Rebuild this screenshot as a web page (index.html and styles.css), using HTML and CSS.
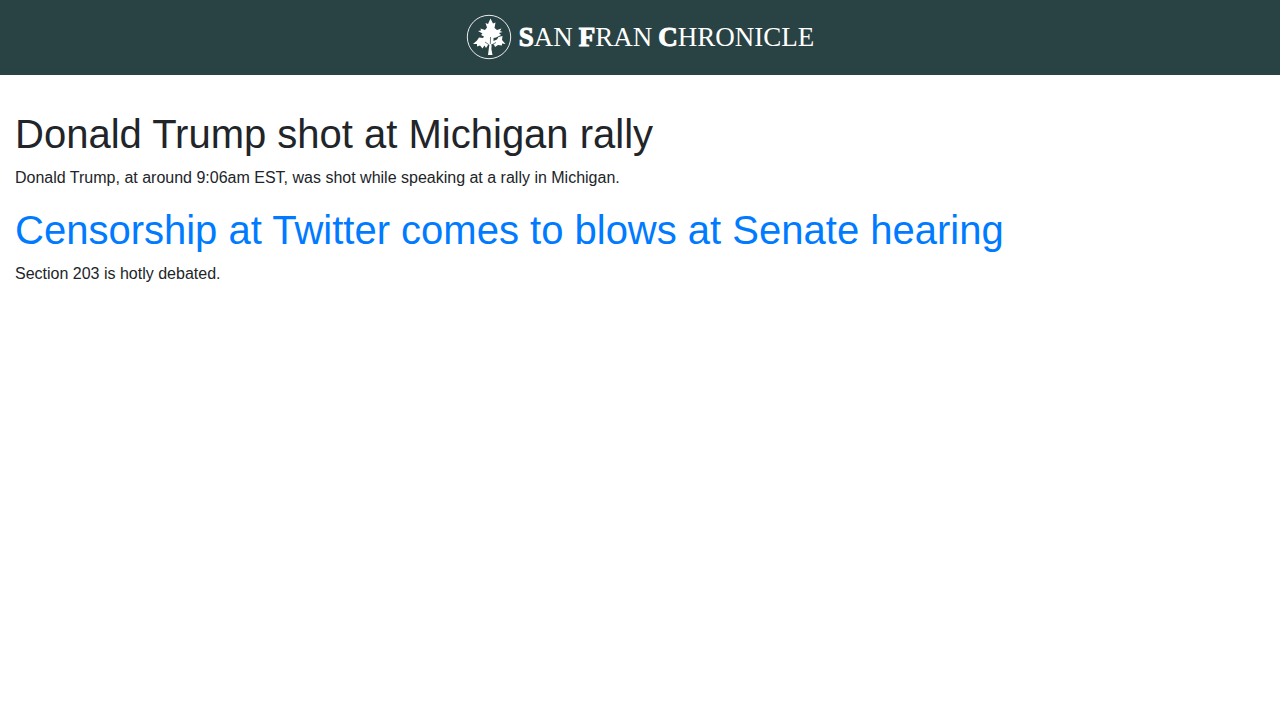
FILE: index.html
```html
<!DOCTYPE html>
<html lang="en">
<head>
<meta charset="utf-8">
<meta name="viewport" content="width=device-width, initial-scale=1">
<title>San Fran Chronicle</title>
<link rel="stylesheet" href="styles.css">
</head>
<body>
<header class="masthead">
  <svg class="emblem" viewBox="0 0 46 46" aria-hidden="true">
    <circle cx="23" cy="23" r="21.7" fill="none" stroke="currentColor" stroke-width="0.9"/>
    <path fill="currentColor" d="M24.500 4.500L27 9.500L29.500 8.500L28.500 14L31 16L35.500 14.500L34 17L36.500 18L33 19L35 21L30 23.500L27.500 24L27.500 27L31 25.500L32.500 23L36.500 22L36 26L39.500 30L36 29.500L36 31.500L32 31L29 33L28 30.500L25.700 30L25.400 35L26.500 41L22 41L23.300 31L22 31L20 34L18.500 31.500L16.500 34.500L14 31.500L11 32.500L11 30L7 30L11 26.500L13 23.500L17 24L18 22.500L15 21L16.500 19.500L12 17L15 16.500L14.500 14.500L19 16L21 13.500L19.500 9L22 10Z"/>
    <path class="veins" d="M24.600 23L24.300 30M25.400 31L30 28.500M23.300 31L19 28"/>
  </svg>
  <div class="wordmark">
    <span><span class="initial">S</span>AN</span>
    <span><span class="initial">F</span>RAN</span>
    <span><span class="initial">C</span>HRONICLE</span>
  </div>
</header>
<main class="stories">
  <article>
    <h1 class="headline">Donald Trump shot at Michigan rally</h1>
    <p class="summary">Donald Trump, at around 9:06am EST, was shot while speaking at a rally in Michigan.</p>
  </article>
  <article>
    <h1 class="headline"><a class="headline-link" href="#">Censorship at Twitter comes to blows at Senate hearing</a></h1>
    <p class="summary">Section 203 is hotly debated.</p>
  </article>
</main>
</body>
</html>
```
FILE: styles.css
```css
* {
  box-sizing: border-box;
}

body {
  margin: 0;
  background: #fff;
  color: #212529;
  font-family: "Liberation Sans", Arial, sans-serif;
  font-size: 16px;
  line-height: 24px;
}

.masthead {
  display: flex;
  align-items: center;
  justify-content: center;
  gap: 7px;
  padding: 14px 15px 15px;
  background: #294244;
  color: #fff;
}

.emblem {
  width: 46px;
  height: 46px;
}

.veins {
  fill: none;
  stroke: #294244;
  stroke-width: 0.7;
}

.wordmark {
  display: flex;
  gap: 6px;
  font-family: "Liberation Serif", "Times New Roman", serif;
  font-size: 27px;
  line-height: 46px;
}

.initial {
  font-weight: bold;
  -webkit-text-stroke: 1px currentColor;
}

.stories {
  padding: 35px 15px 0;
}

.headline {
  margin: 0 0 8px;
  font-size: 40px;
  font-weight: 400;
  line-height: 48px;
}

.headline-link {
  color: #007bff;
  text-decoration: none;
}

.summary {
  margin: 0 0 16px;
}
```
